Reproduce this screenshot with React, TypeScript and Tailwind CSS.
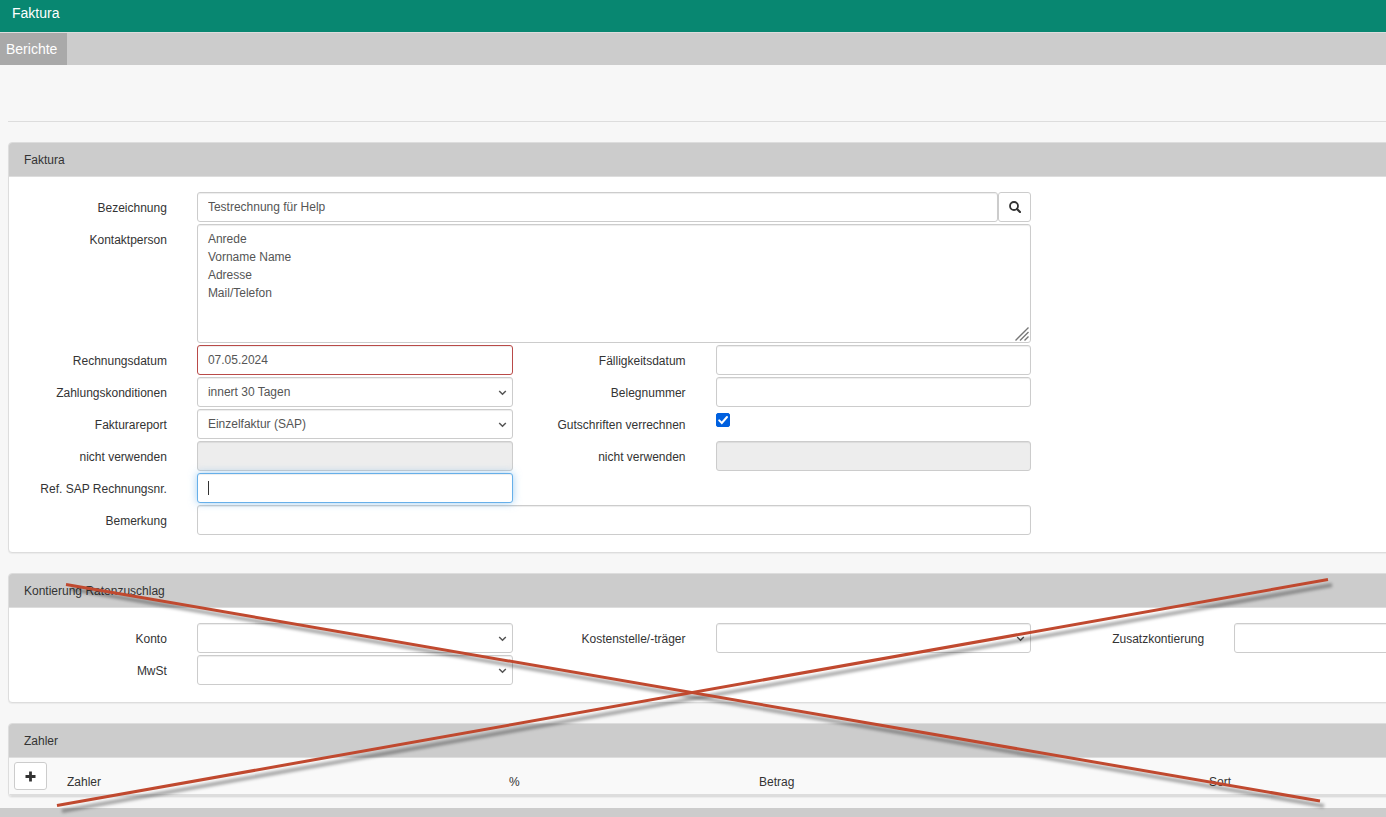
import { InputHTMLAttributes, ReactNode } from "react";
import clsx from "clsx";

const controlClass =
  "block w-full h-[30px] px-[10px] py-[5px] text-xs leading-[18px] text-[#555] bg-white border rounded-[3px] outline-none";

const toneClasses = {
  normal: "border-[#ccc] shadow-[inset_0_1px_1px_rgba(0,0,0,0.075)]",
  error: "border-[#b94a48] shadow-[inset_0_1px_1px_rgba(0,0,0,0.075)]",
  active: "border-[#66afe9] shadow-[inset_0_1px_1px_rgba(0,0,0,0.075),0_0_8px_rgba(102,175,233,0.6)]",
};

type FieldProps = {
  id: string;
  label: string;
  wide?: boolean;
  children: ReactNode;
};

function Field({ id, label, wide, children }: FieldProps) {
  return (
    <div className={clsx("grid mb-[2px]", wide ? "col-span-2 grid-cols-[1fr_5fr]" : "grid-cols-[1fr_2fr]")}>
      <label htmlFor={id} className="px-[15px] pt-[7px] text-right leading-[18px] whitespace-nowrap">
        {label}
      </label>
      <div className="px-[15px] min-w-0">{children}</div>
    </div>
  );
}

type TextInputProps = InputHTMLAttributes<HTMLInputElement> & { tone?: keyof typeof toneClasses };

function TextInput({ className, tone = "normal", ...props }: TextInputProps) {
  return (
    <input type="text" className={clsx(controlClass, toneClasses[tone], "disabled:bg-[#ededed]", className)} {...props} />
  );
}

function SelectInput({ id, options }: { id: string; options: string[] }) {
  return (
    <div className="relative">
      <select id={id} className={clsx(controlClass, toneClasses.normal, "appearance-none")}>
        {options.map((option) => (
          <option key={option}>{option}</option>
        ))}
      </select>
      <svg className="absolute right-[6px] top-[13px] pointer-events-none" width="9" height="6" viewBox="0 0 9 6">
        <path d="M1.2 1 L4.5 4.3 L7.8 1" fill="none" stroke="#555" strokeWidth="1.5" />
      </svg>
    </div>
  );
}

function Panel({ title, children }: { title: string; children: ReactNode }) {
  return (
    <section className="mb-5 bg-white border border-[#ddd] rounded-[4px] overflow-hidden shadow-[0_1px_1px_rgba(0,0,0,0.05)]">
      <h3 className="h-[34px] px-[15px] pt-[8px] leading-[18px] bg-[#ccc] border-b border-[#ddd]">{title}</h3>
      {children}
    </section>
  );
}

function SearchIcon() {
  return (
    <svg width="12" height="12" viewBox="0 0 12 12" fill="none" stroke="#333">
      <circle cx="5" cy="5" r="4" strokeWidth="1.8" />
      <path d="M8 8 L11 11" strokeWidth="2.2" strokeLinecap="round" />
    </svg>
  );
}

function CrossOut() {
  return (
    <svg
      className="absolute left-0 top-0 overflow-visible pointer-events-none"
      width="1378"
      height="244"
      viewBox="8 573 1378 244"
    >
      <defs>
        <filter id="soft" filterUnits="userSpaceOnUse" x="0" y="560" width="1400" height="270">
          <feGaussianBlur stdDeviation="1.8" />
        </filter>
      </defs>
      <g stroke="#000" strokeOpacity="0.32" strokeWidth="4" filter="url(#soft)">
        <path d="M71 589 L1324 806" />
        <path d="M62 811 L1332 585" />
      </g>
      <g stroke="#c0492f" strokeWidth="3">
        <path d="M66 584.5 L1320 801" />
        <path d="M57 805.5 L1328 579.5" />
      </g>
    </svg>
  );
}

function App() {
  return (
    <div className="min-h-screen overflow-hidden bg-[#f7f7f7] text-xs text-[#333] font-['Liberation_Sans',Arial,sans-serif]">
      <header className="h-8 px-3 pt-[3px] bg-[#088771] text-white text-sm leading-5">Faktura</header>
      <nav className="flex h-[33px] bg-[#ccc] border-t border-[#ddd] text-sm">
        <a href="#berichte" className="flex items-center w-[67px] pl-[6px] bg-[#a9a9a9] text-white">
          Berichte
        </a>
      </nav>

      {/* the form is wider than the viewport and gets clipped on the right */}
      <main className="ml-2 -mr-[180px] pt-14">
        <hr className="mb-5 border-[#ddd]" />

        <Panel title="Faktura">
          <div className="py-[15px]">
            <div className="grid grid-cols-3">
              <Field id="bezeichnung" label="Bezeichnung" wide>
                <div className="flex">
                  <TextInput id="bezeichnung" defaultValue="Testrechnung für Help" className="flex-1" />
                  <button
                    type="button"
                    aria-label="Suchen"
                    className="flex items-center justify-center w-[33px] h-[30px] bg-white border border-[#ccc] rounded-[3px]"
                  >
                    <SearchIcon />
                  </button>
                </div>
              </Field>
            </div>
            <div className="grid grid-cols-3">
              <Field id="kontakt" label="Kontaktperson" wide>
                <div className="relative">
                  <textarea
                    id="kontakt"
                    className={clsx(controlClass, toneClasses.normal, "h-[119px] resize-none")}
                    defaultValue={"Anrede\nVorname Name\nAdresse\nMail/Telefon"}
                  />
                  <svg className="absolute right-[2px] bottom-[2px]" width="14" height="14" viewBox="0 0 14 14">
                    <path d="M0.5 13.5 L13.5 0.5 M5 13.5 L13.5 5 M9.5 13.5 L13.5 9.5" stroke="#777" strokeWidth="1.4" />
                  </svg>
                </div>
              </Field>
            </div>
            <div className="grid grid-cols-3">
              <Field id="datum" label="Rechnungsdatum">
                <TextInput id="datum" defaultValue="07.05.2024" tone="error" />
              </Field>
              <Field id="faellig" label="Fälligkeitsdatum">
                <TextInput id="faellig" />
              </Field>
            </div>
            <div className="grid grid-cols-3">
              <Field id="zahlung" label="Zahlungskonditionen">
                <SelectInput id="zahlung" options={["innert 30 Tagen"]} />
              </Field>
              <Field id="beleg" label="Belegnummer">
                <TextInput id="beleg" />
              </Field>
            </div>
            <div className="grid grid-cols-3">
              <Field id="report" label="Fakturareport">
                <SelectInput id="report" options={["Einzelfaktur (SAP)"]} />
              </Field>
              <Field id="gutschriften" label="Gutschriften verrechnen">
                <div className="relative mt-[4px] w-[14px] h-[14px]">
                  <input
                    id="gutschriften"
                    type="checkbox"
                    defaultChecked
                    className="peer block w-[14px] h-[14px] appearance-none rounded-[2px] border border-[#8f8f9d] checked:bg-[#0060df] checked:border-[#0060df]"
                  />
                  <svg
                    className="absolute inset-0 hidden peer-checked:block pointer-events-none"
                    width="14"
                    height="14"
                    viewBox="0 0 14 14"
                  >
                    <path d="M3.2 7.4 L5.8 10 L11 4" fill="none" stroke="#fff" strokeWidth="2" strokeLinecap="round" />
                  </svg>
                </div>
              </Field>
            </div>
            <div className="grid grid-cols-3">
              <Field id="leer1" label="nicht verwenden">
                <TextInput id="leer1" disabled />
              </Field>
              <Field id="leer2" label="nicht verwenden">
                <TextInput id="leer2" disabled />
              </Field>
            </div>
            <div className="grid grid-cols-3">
              <Field id="sap" label="Ref. SAP Rechnungsnr.">
                <div className="relative">
                  <TextInput id="sap" tone="active" className="caret-transparent" />
                  <span className="absolute left-[11px] top-[8px] w-px h-[14px] bg-[#333]" />
                </div>
              </Field>
            </div>
            <div className="grid grid-cols-3">
              <Field id="bemerkung" label="Bemerkung" wide>
                <TextInput id="bemerkung" />
              </Field>
            </div>
          </div>
        </Panel>

        <div className="relative">
          <Panel title="Kontierung Ratenzuschlag">
            <div className="py-[15px]">
              <div className="grid grid-cols-3">
                <Field id="konto" label="Konto">
                  <SelectInput id="konto" options={[""]} />
                </Field>
                <Field id="kostenstelle" label="Kostenstelle/-träger">
                  <SelectInput id="kostenstelle" options={[""]} />
                </Field>
                <Field id="zusatz" label="Zusatzkontierung">
                  <TextInput id="zusatz" />
                </Field>
                <Field id="mwst" label="MwSt">
                  <SelectInput id="mwst" options={[""]} />
                </Field>
              </div>
            </div>
          </Panel>

          <Panel title="Zahler">
            <table className="w-full table-fixed bg-[#f9f9f9] border-b-2 border-[#ddd]">
              <thead>
                <tr className="text-left align-bottom">
                  <th className="w-[53px] px-[5px] pt-[4px] pb-[4px]">
                    <button
                      type="button"
                      aria-label="Zahler hinzufügen"
                      className="flex items-center justify-center w-[33px] h-[28px] bg-white border border-[#ccc] rounded-[3px]"
                    >
                      <svg width="11" height="11" viewBox="0 0 11 11">
                        <path d="M5.5 0.5 V10.5 M0.5 5.5 H10.5" stroke="#333" strokeWidth="2.8" />
                      </svg>
                    </button>
                  </th>
                  <th className="w-[442px] px-[5px] pb-[3px] font-normal leading-[18px]">Zahler</th>
                  <th className="w-[250px] px-[5px] pb-[3px] font-normal leading-[18px]">%</th>
                  <th className="w-[450px] px-[5px] pb-[3px] font-normal leading-[18px]">Betrag</th>
                  <th className="px-[5px] pb-[3px] font-normal leading-[18px]">Sort</th>
                </tr>
              </thead>
            </table>
          </Panel>
          <CrossOut />
        </div>
      </main>
      <footer className="-mt-[9px] h-[9px] bg-[#ccc]" />
    </div>
  );
}

export default App;
